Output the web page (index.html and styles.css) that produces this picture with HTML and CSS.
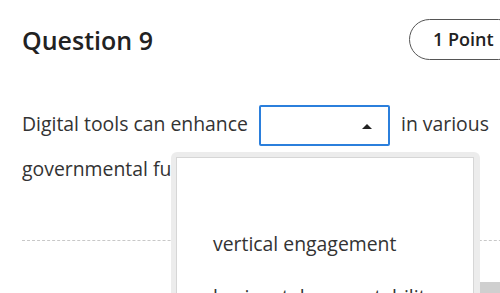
FILE: index.html
```html
<!DOCTYPE html>
<html>
<head>
<meta charset="utf-8">
<link rel="stylesheet" href="styles.css">
</head>
<body>
<div class="page">
  <div class="header">
    <h1 class="title">Question 9</h1>
    <div class="points">1 Point</div>
  </div>
  <p class="question">Digital tools can enhance <span class="select-wrap"><span class="select"><span class="caret"></span></span><span class="menu"><span class="menu-inner"><span class="option">vertical engagement</span><span class="option">horizontal accountability</span></span></span></span> in various governmental functions.</p>
  <div class="divider"></div>
</div>
<div class="scroll-thumb"></div>
</body>
</html>
```
FILE: styles.css
```css
html, body {
  margin: 0;
  padding: 0;
  overflow: hidden;
  background: #fff;
}
body {
  width: 500px;
  height: 293px;
  position: relative;
  font-family: "Open Sans", "Noto Sans", sans-serif;
  color: #333;
}
.page {
  width: 560px;
  padding: 19px 0 0 22px;
}
.header {
  display: flex;
  align-items: center;
  justify-content: space-between;
  width: 497px;
  height: 41px;
}
.title {
  margin: 0;
  font-size: 25px;
  font-weight: 600;
  color: #222;
}
.points {
  box-sizing: border-box;
  width: 110px;
  height: 41px;
  padding: 0 0 0 23px;
  border: 1px solid #555;
  border-radius: 21px;
  font-size: 18px;
  font-weight: 600;
  line-height: 39px;
  color: #222;
  white-space: nowrap;
}
.question {
  margin: 41px 0 0 0;
  width: 470px;
  font-size: 19.4px;
  line-height: 45px;
}
.select-wrap {
  position: relative;
  display: inline-block;
  vertical-align: middle;
  width: 131px;
  height: 41px;
  margin: 0 6px 0 6px;
}
.select {
  display: block;
  box-sizing: border-box;
  width: 131px;
  height: 41px;
  border: 2px solid #2b7fdc;
  border-radius: 2px;
  position: relative;
}
.caret {
  position: absolute;
  right: 16px;
  top: 17px;
  width: 0;
  height: 0;
  border-left: 5px solid transparent;
  border-right: 5px solid transparent;
  border-bottom: 5px solid #222;
}
.menu {
  position: absolute;
  left: -88px;
  top: 47px;
  width: 309px;
  height: 160px;
  box-sizing: border-box;
  padding: 5px 6px 0 5px;
  background: #ececec;
  border-radius: 6px 6px 0 0;
  z-index: 2;
}
.menu-inner {
  display: block;
  height: 100%;
  background: #fff;
  border-top: 1px solid #d6d6d6;
  border-left: 1px solid #d6d6d6;
  border-right: 1px solid #d6d6d6;
  padding: 63px 0 0 36px;
  box-sizing: border-box;
}
.option {
  display: block;
  line-height: 45px;
  margin-bottom: 8px;
  color: #333;
  white-space: nowrap;
}
.divider {
  margin-top: 49px;
  width: 520px;
  border-top: 1px dashed #c8c8c8;
}
.scroll-thumb {
  position: absolute;
  right: 0;
  top: 282px;
  width: 20px;
  height: 11px;
  background: #cfcfcf;
}
```
